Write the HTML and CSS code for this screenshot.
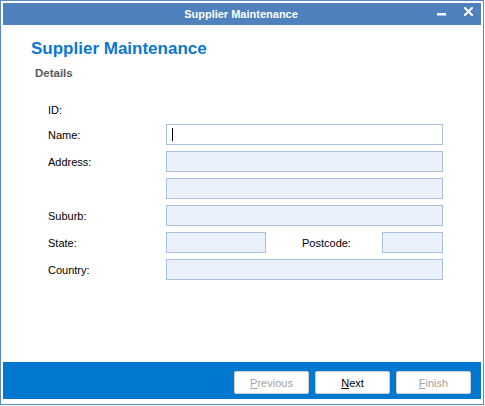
FILE: index.html
```html
<!DOCTYPE html>
<html lang="en">
<head>
    <meta charset="UTF-8">
    <title>Supplier Maintenance</title>
    <link rel="stylesheet" href="styles.css">
</head>
<body>
<div class="window">
    <!-- Title bar -->
    <div class="titlebar">
        <span class="titlebar-text">Supplier Maintenance</span>
        <svg class="win-btn min" width="9" height="3" viewBox="0 0 9 3">
            <rect x="0" y="0" width="9" height="2.5" fill="#fff"/>
        </svg>
        <svg class="win-btn close" width="9" height="9" viewBox="0 0 9 9">
            <path d="M1 1 L8 8 M8 1 L1 8" stroke="#fff" stroke-width="2" stroke-linecap="square"/>
        </svg>
    </div>

    <div class="content">
        <h1>Supplier Maintenance</h1>
        <h2>Details</h2>

        <div class="form">
            <label>ID:</label>
            <div></div>

            <label>Name:</label>
            <div class="field active"><span class="caret"></span></div>

            <label>Address:</label>
            <div class="field"></div>

            <label></label>
            <div class="field"></div>

            <label>Suburb:</label>
            <div class="field"></div>

            <label>State:</label>
            <div class="split">
                <div class="field state"></div>
                <label class="postcode-label">Postcode:</label>
                <div class="field postcode"></div>
            </div>

            <label>Country:</label>
            <div class="field"></div>
        </div>
    </div>

    <!-- Wizard buttons -->
    <div class="footer">
        <button disabled><u>P</u>revious</button>
        <button><u>N</u>ext</button>
        <button disabled><u>F</u>inish</button>
    </div>
</div>
</body>
</html>
```

FILE: styles.css
```css
body {
    margin: 0;
    background: #fff;
    font-family: "Liberation Sans", Arial, sans-serif;
}
.window {
    box-sizing: border-box;
    width: 484px;
    height: 405px;
    border: 1px solid #5a89c4;
    padding: 2px;
    display: flex;
    flex-direction: column;
}
.titlebar {
    height: 22px;
    background-color: #4f81bd;
    display: flex;
    align-items: center;
    padding-right: 8px;
}
.titlebar-text {
    flex: 1;
    text-align: center;
    padding-left: 46px;
    color: #fff;
    font-weight: bold;
    font-size: 11px;
    line-height: 22px;
}
.win-btn.min {
    margin-left: 4px;
}
.win-btn.close {
    margin-left: 18px;
    margin-bottom: 5px;
}
.content {
    flex: 1;
    padding-left: 28px;
}
h1 {
    margin: 14px 0 0 0;
    font-size: 17px;
    line-height: 20px;
    color: #0a78d0;
}
h2 {
    margin: 7px 0 0 4px;
    font-size: 11.5px;
    line-height: 14px;
    color: #5a5a5a;
}
.form {
    display: grid;
    grid-template-columns: 118px 277px;
    grid-template-rows: 16px repeat(6, 21px);
    row-gap: 6px;
    margin: 22px 0 0 17px;
    font-size: 11px;
}
.form label {
    align-self: center;
    color: #000;
}
.field {
    box-sizing: border-box;
    height: 21px;
    border: 1px solid #a9c0df;
    background-color: #eaf1fb;
}
.field.active {
    background-color: #fff;
    padding: 3px 0 0 5px;
}
.caret {
    display: block;
    width: 1px;
    height: 13px;
    background: #000;
}
.split {
    display: flex;
    align-items: center;
}
.field.state {
    width: 100px;
}
.postcode-label {
    margin-left: 36px;
}
.field.postcode {
    width: 61px;
    margin-left: auto;
}
.footer {
    height: 37px;
    box-sizing: border-box;
    margin-bottom: 3px;
    background-color: #0078cf;
    display: flex;
    justify-content: flex-end;
    gap: 6px;
    padding: 9px 10px 5px 0;
}
.footer button {
    width: 75px;
    height: 23px;
    background: #fff;
    border: 1px solid #cfcfcf;
    border-radius: 2px;
    font-family: "Liberation Sans", Arial, sans-serif;
    font-size: 11px;
    color: #000;
    padding: 0;
}
.footer button:disabled {
    color: #a3a3a3;
}
```
